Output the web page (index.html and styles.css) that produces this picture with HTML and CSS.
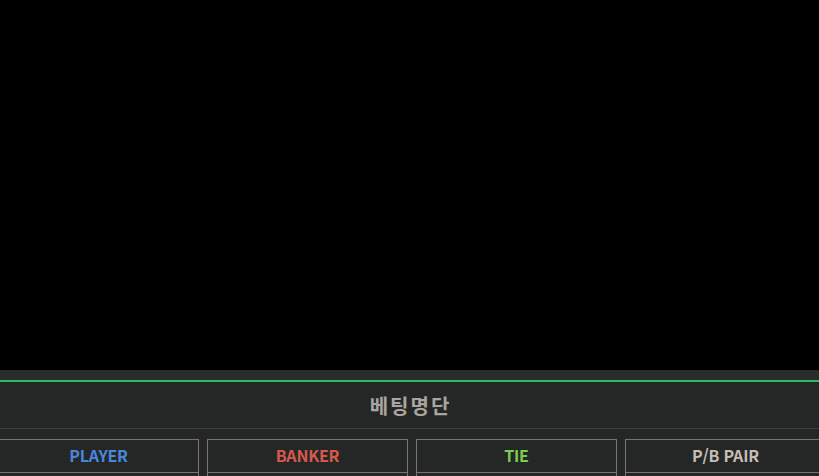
FILE: index.html
```html
<!DOCTYPE html>
<html lang="ko">
<head>
<meta charset="utf-8">
<link rel="stylesheet" href="styles.css">
</head>
<body>
<div class="video"></div>
<div class="panel">
  <div class="strip"></div>
  <div class="title">베팅명단</div>
  <div class="columns">
    <div class="col"><div class="col-head player">PLAYER</div><div class="col-body"></div></div>
    <div class="col"><div class="col-head banker">BANKER</div><div class="col-body"></div></div>
    <div class="col"><div class="col-head tie">TIE</div><div class="col-body"></div></div>
    <div class="col"><div class="col-head pair">P/B PAIR</div><div class="col-body"></div></div>
  </div>
</div>
</body>
</html>
```
FILE: styles.css
```css
html, body {
  margin: 0;
  padding: 0;
  background: #000;
  overflow: hidden;
  height: 476px;
}
body {
  font-family: "Noto Sans CJK KR", "Open Sans", sans-serif;
}
.video {
  height: 370px;
  background: #000;
}
.panel {
  background: #252727;
  height: 106px;
  overflow: hidden;
}
.strip {
  height: 10px;
  background: #292b2c;
  border-bottom: 2px solid #2dbb5d;
}
.title {
  height: 46px;
  border-bottom: 1px solid #3b3d48;
  display: flex;
  align-items: center;
  justify-content: center;
  font-family: "Noto Sans CJK KR", sans-serif;
  font-weight: 700;
  font-size: 20px;
  color: #aaa59e;
  letter-spacing: 2px;
  padding-left: 2px;
}
.columns {
  display: flex;
  gap: 8px;
  margin-left: -2px;
  padding-top: 10px;
}
.col {
  flex: 0 0 201px;
  box-sizing: border-box;
  border: 1px solid #78746e;
  border-bottom: none;
}
.col-head {
  height: 33px;
  box-sizing: border-box;
  padding-bottom: 2px;
  border-bottom: 1px solid #78746e;
  display: flex;
  align-items: center;
  justify-content: center;
  font-weight: 700;
  font-size: 16px;
  letter-spacing: -0.2px;
}
.col-body {
  height: 40px;
}
.player { color: #4a86dc; }
.banker { color: #d8594b; }
.tie { color: #7ccd4b; }
.pair { color: #c4beb4; }
```
